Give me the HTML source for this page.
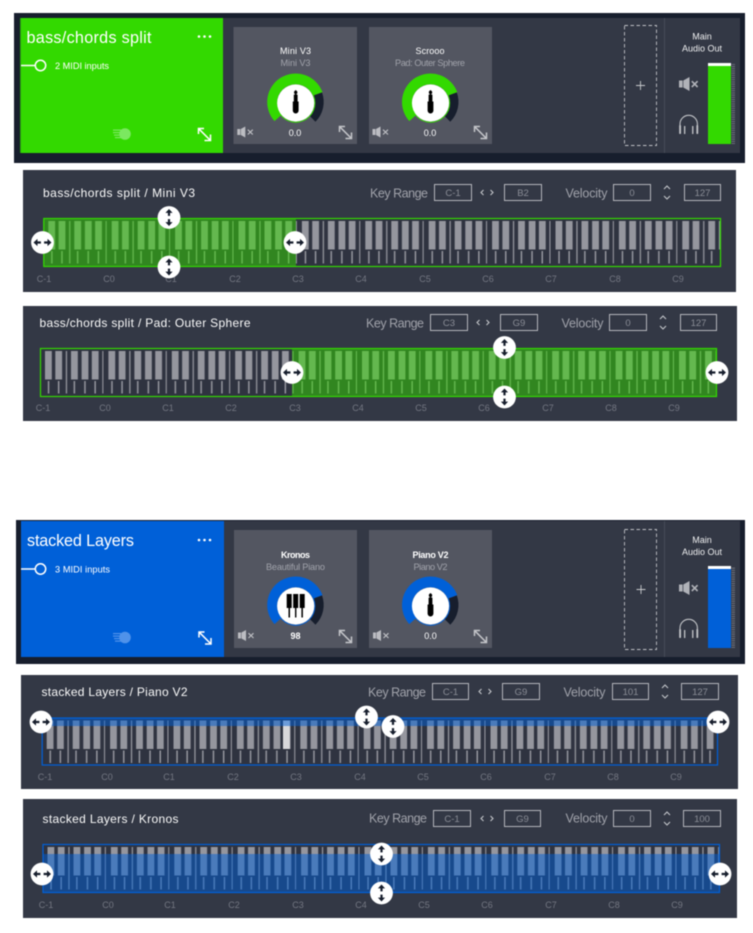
<!DOCTYPE html>
<html><head><meta charset="utf-8"><title>Layers</title>
<style>
html,body{margin:0;padding:0;background:#fff;width:753px;height:933px;overflow:hidden}
svg{display:block;position:absolute;left:0;top:0;filter:blur(.45px)}
text{font-family:"Liberation Sans",sans-serif}
.t{font-size:12px;fill:#fafafa}
.kr{font-size:12.5px;fill:#a0a2aa}
.bx{fill:none;stroke:#b4b6bb;stroke-width:1}
.v{font-size:9.5px;fill:#8a8d96;text-anchor:middle}
.o{font-size:9px;fill:#747782;text-anchor:middle}
.n{font-size:9px;fill:#fff;text-anchor:middle}
.s{font-size:9.2px;fill:#a0a2aa;text-anchor:middle}
.big{font-size:16.2px;fill:#fff}
.mi{font-size:9.2px;fill:#fff}
.m{font-size:9px;fill:#eeeff0;text-anchor:middle}
.ch{fill:none;stroke:#c4c6cb;stroke-width:1.1}
</style></head><body>
<svg xmlns="http://www.w3.org/2000/svg" width="753" height="933" viewBox="0 0 753 933">
<defs>
<pattern id="k" patternUnits="userSpaceOnUse" width="63.4" height="80">
<rect width="63.4" height="80" fill="#2f3340"/>
<g fill="#95969e">
<rect x="5" y="3" width="6.8" height="28.5"/><rect x="15.3" y="3" width="6.8" height="28.5"/>
<rect x="31" y="3" width="6.8" height="28.5"/><rect x="41.6" y="3" width="6.8" height="28.5"/>
<rect x="51.8" y="3" width="6.8" height="28.5"/>
<rect x="25.8" y="3" width="1.3" height="42.5"/><rect x="62.3" y="3" width="1.1" height="42.5"/>
<rect x="7.8" y="33" width="1.5" height="12.5"/><rect x="17.9" y="33" width="1.5" height="12.5"/>
<rect x="33.6" y="33" width="1.5" height="12.5"/><rect x="44.2" y="33" width="1.5" height="12.5"/>
<rect x="54.4" y="33" width="1.5" height="12.5"/>
</g>
</pattern>
<pattern id="k2" href="#k" patternTransform="translate(43.3,218)"/>
<pattern id="k3" href="#k" patternTransform="translate(40,348)"/>
<pattern id="k4" href="#k" patternTransform="translate(41.7,717.5)"/>
<pattern id="k5" href="#k" patternTransform="translate(42.5,844)"/>
<g id="hh"><circle r="11.4" fill="#fff"/><path fill="#171e2d" d="M-9 0L-5 -3.6V-1.1H-1.6V1.1H-5V3.6ZM9 0L5 -3.6V-1.1H1.6V1.1H5V3.6Z"/></g>
<g id="hv"><circle r="11.4" fill="#fff"/><path fill="#171e2d" d="M0 -8.5L-3.6 -4.6H-1.1V-1.6H1.1V-4.6H3.6ZM0 8.5L-3.6 4.6H-1.1V1.6H1.1V4.6H3.6Z"/></g>
<g id="exp" fill="none" stroke="currentColor" stroke-width="1.5"><path d="M.8 .8L12 12M.5 6V.5H6M12.5 6.5V12.5H6.5"/></g>
<g id="spk"><path fill="currentColor" d="M0 3.5H3.6V10.5H0ZM4.3 3.5L10.5 0V14L4.3 10.5Z"/><path fill="none" stroke="currentColor" stroke-width="1.6" d="M12.8 4.2L18.6 10M18.6 4.2L12.8 10"/></g>
<g id="spks"><path fill="currentColor" d="M0 2.5H3V8.5H0ZM3.5 2.5L8 0V11L3.5 8.5Z"/><path fill="none" stroke="currentColor" stroke-width="1.2" d="M10.5 3.2L15.5 8M15.5 3.2L10.5 8"/></g>
<g id="jack"><circle cy="1" r="18.6" fill="#fff"/><path fill="#000" d="M-1.6 -10.5L0 -12L1.6 -10.5V-8.4H.8V-7.4H1.9V-.5H2.9V8.6A2.9 2.9 0 0 1 -2.9 8.6V-.5H-1.9V-7.4H-.8V-8.4H-1.6Z"/></g>
<g id="pno"><circle cy="1" r="18.6" fill="#fff"/><path fill="#000" d="M-9 -11H-4V3H-5.7V12.5H-7.2V3H-9ZM-2.5 -11H2.5V3H.7V12.5H-.7V3H-2.5ZM4 -11H9V3H7.2V12.5H5.7V3H4Z"/></g>
<g id="ring"><path fill="none" stroke="currentColor" stroke-width="10" d="M-17.46 15.72A23.5 23.5 0 1 1 22.08 -8.04"/><path fill="none" stroke="#171e2d" stroke-width="9" d="M22.08 -8.04A23.5 23.5 0 0 1 16.6 16.6"/><circle cy="1" r="19.2" fill="none" stroke="currentColor" stroke-width="1"/></g>
<g id="head"><path fill="none" stroke="#c2c4c8" stroke-width="1.1" d="M1 14V9A8.7 8.7 0 0 1 18.4 9V14"/><rect x=".2" y="10" width="1.8" height="9" rx=".8" fill="#c2c4c8"/><rect x="17.4" y="10" width="1.8" height="9" rx=".8" fill="#c2c4c8"/><rect x="5" y="11" width="1.3" height="8" fill="#c2c4c8"/><rect x="13.1" y="11" width="1.3" height="8" fill="#c2c4c8"/></g>
<g id="upd"><path class="ch" d="M-3 -4L0 -7L3 -4M-3 3L0 6L3 3"/></g>
<pattern id="tk" patternUnits="userSpaceOnUse" width="4" height="2.2"><rect width="4" height="1.1" fill="#6b6f7a"/></pattern>
</defs>

<!-- TOP GROUP 1 -->
<rect x="14" y="13" width="731" height="150" fill="#171e2d"/>
<rect x="20" y="18" width="720" height="135" fill="#333845"/>
<rect x="20" y="18" width="203" height="135" fill="#33d900"/>
<rect x="20" y="18" width="1" height="135" fill="#2c9a16"/>
<text x="26.5" y="43" class="big" textLength="125">bass/chords split</text>
<g fill="#fff"><circle cx="199" cy="36.5" r="1.3"/><circle cx="204.5" cy="36.5" r="1.3"/><circle cx="210" cy="36.5" r="1.3"/></g>
<path d="M21 65.5H35" stroke="#fff" stroke-width="1.5"/><circle cx="40.5" cy="65.5" r="5.2" fill="none" stroke="#fff" stroke-width="1.5"/>
<text x="55" y="69" class="mi" textLength="54">2 MIDI inputs</text>
<g fill="#7be860"><circle cx="125" cy="134" r="5.8"/><rect x="113" y="129.5" width="8" height="1.2"/><rect x="113" y="132" width="8" height="1.2"/><rect x="114" y="134.5" width="8" height="1.2"/><rect x="115" y="137" width="7" height="1.2"/></g>
<use href="#exp" x="198" y="128" style="color:#fff"/>

<rect x="233.5" y="27" width="123.5" height="117" fill="#535661"/>
<text x="295.5" y="54" class="n" textLength="31">Mini V3</text>
<text x="295.5" y="66" class="s" textLength="30">Mini V3</text>
<use href="#ring" x="295.7" y="102" style="color:#33d900"/><use href="#jack" x="295.7" y="102"/>
<text x="295" y="136" class="n">0.0</text>
<use href="#spks" x="237.3" y="126.5" style="color:#bcbdc2"/>
<use href="#exp" x="339" y="126" style="color:#c4c5c9"/>

<rect x="369" y="27" width="123" height="117" fill="#535661"/>
<text x="430" y="54" class="n" textLength="29">Scrooo</text>
<text x="430" y="66" class="s" textLength="70">Pad: Outer Sphere</text>
<use href="#ring" x="430.5" y="102" style="color:#33d900"/><use href="#jack" x="430.5" y="102"/>
<text x="430" y="136" class="n">0.0</text>
<use href="#spks" x="372.5" y="126.5" style="color:#bcbdc2"/>
<use href="#exp" x="474" y="126" style="color:#c4c5c9"/>

<rect x="624.5" y="25.5" width="32" height="120" fill="none" stroke="#c0c2c6" stroke-width=".9" stroke-dasharray="3.5 2.5"/>
<path d="M636 85.5H645M640.5 81V90" stroke="#c8cacd" stroke-width=".9"/>
<rect x="664" y="18" width="1" height="135" fill="#464b58"/>
<text x="702" y="39.5" class="m">Main</text><text x="702" y="51.5" class="m" textLength="40">Audio Out</text>
<use href="#spk" x="679" y="77" style="color:#b0b2b8"/>
<use href="#head" x="679" y="115"/>
<rect x="708" y="63" width="23" height="81" fill="#33d900"/><rect x="708" y="63" width="23" height="3" fill="#fff"/>
<rect x="731.5" y="64" width="3.5" height="80" fill="url(#tk)"/>

<!-- PANEL 2 -->
<rect x="23" y="170" width="713" height="122" fill="#333845"/>
<text x="43" y="197" class="t" textLength="152">bass/chords split / Mini V3</text>
<text x="370" y="197.5" class="kr" textLength="58">Key Range</text>
<rect x="434.5" y="184.5" width="37" height="16" class="bx"/><text x="453" y="196" class="v">C-1</text>
<path class="ch" d="M483.5 190L481 192.5L483.5 195M490.5 190L493 192.5L490.5 195"/>
<rect x="504.5" y="184.5" width="37" height="16" class="bx"/><text x="523" y="196" class="v">B2</text>
<text x="565.5" y="197.5" class="kr" textLength="42">Velocity</text>
<rect x="613.5" y="184.5" width="37" height="16" class="bx"/><text x="632" y="196" class="v">0</text>
<use href="#upd" x="667" y="193"/>
<rect x="684.5" y="184.5" width="36" height="16" class="bx"/><text x="702.5" y="196" class="v">127</text>
<rect x="43.3" y="218" width="677.7" height="49" fill="url(#k2)"/>
<rect x="43.3" y="218" width="252.7" height="48" fill="#33d900" opacity=".5"/>
<rect x="43.8" y="218.5" width="676.7" height="48" fill="none" stroke="#33d900" stroke-width="1.2"/>
<text x="44" y="282" class="o">C-1</text><text x="109" y="282" class="o">C0</text><text x="171" y="282" class="o">C1</text><text x="235" y="282" class="o">C2</text><text x="298" y="282" class="o">C3</text><text x="361" y="282" class="o">C4</text><text x="425" y="282" class="o">C5</text><text x="488" y="282" class="o">C6</text><text x="551" y="282" class="o">C7</text><text x="615" y="282" class="o">C8</text><text x="678" y="282" class="o">C9</text>
<use href="#hh" x="42.5" y="242.5"/><use href="#hh" x="295" y="242.5"/>
<use href="#hv" x="169" y="217.5"/><use href="#hv" x="169" y="267"/>

<!-- PANEL 3 -->
<rect x="23" y="306" width="714" height="115" fill="#333845"/>
<text x="39.5" y="327" class="t" textLength="211">bass/chords split / Pad: Outer Sphere</text>
<text x="366" y="327.5" class="kr" textLength="58">Key Range</text>
<rect x="430.5" y="314.5" width="37" height="16" class="bx"/><text x="449" y="326" class="v">C3</text>
<path class="ch" d="M479.5 320L477 322.5L479.5 325M486.5 320L489 322.5L486.5 325"/>
<rect x="500.5" y="314.5" width="37" height="16" class="bx"/><text x="519" y="326" class="v">G9</text>
<text x="561.5" y="327.5" class="kr" textLength="42">Velocity</text>
<rect x="609.5" y="314.5" width="37" height="16" class="bx"/><text x="628" y="326" class="v">0</text>
<use href="#upd" x="663" y="323"/>
<rect x="680.5" y="314.5" width="36" height="16" class="bx"/><text x="698.5" y="326" class="v">127</text>
<rect x="40" y="348" width="677" height="49" fill="url(#k3)"/>
<rect x="292" y="348" width="425" height="48.5" fill="#33d900" opacity=".5"/>
<rect x="40.5" y="348.5" width="676" height="48" fill="none" stroke="#33d900" stroke-width="1.2"/>
<text x="43" y="411" class="o">C-1</text><text x="105" y="411" class="o">C0</text><text x="168" y="411" class="o">C1</text><text x="231" y="411" class="o">C2</text><text x="295" y="411" class="o">C3</text><text x="358" y="411" class="o">C4</text><text x="421" y="411" class="o">C5</text><text x="484" y="411" class="o">C6</text><text x="548" y="411" class="o">C7</text><text x="611" y="411" class="o">C8</text><text x="674" y="411" class="o">C9</text>
<use href="#hh" x="292" y="372.5"/><use href="#hh" x="717" y="372.5"/>
<use href="#hv" x="504.5" y="347.5"/><use href="#hv" x="504.5" y="397"/>

<!-- TOP GROUP 2 -->
<rect x="16" y="520" width="729" height="144" fill="#171e2d"/>
<rect x="21" y="521" width="719" height="136" fill="#333845"/>
<rect x="21" y="521" width="203" height="136" fill="#0060d8"/>
<text x="27" y="546" class="big" textLength="107">stacked Layers</text>
<g fill="#fff"><circle cx="199" cy="540" r="1.3"/><circle cx="204.5" cy="540" r="1.3"/><circle cx="210" cy="540" r="1.3"/></g>
<path d="M21 569H35" stroke="#fff" stroke-width="1.5"/><circle cx="40.5" cy="569" r="5.2" fill="none" stroke="#fff" stroke-width="1.5"/>
<text x="55" y="572.5" class="mi" textLength="55">3 MIDI inputs</text>
<g fill="#4f92ea"><circle cx="125" cy="637.5" r="5.8"/><rect x="113" y="633" width="8" height="1.2"/><rect x="113" y="635.5" width="8" height="1.2"/><rect x="114" y="638" width="8" height="1.2"/><rect x="115" y="640.5" width="7" height="1.2"/></g>
<use href="#exp" x="198.5" y="631.5" style="color:#fff"/>

<rect x="234" y="530" width="123" height="118" fill="#535661"/>
<text x="295.5" y="558" class="n" textLength="29" font-weight="bold">Kronos</text>
<text x="295.5" y="570" class="s" textLength="59">Beautiful Piano</text>
<use href="#ring" x="295.7" y="605" style="color:#0060d8"/><use href="#pno" x="295.7" y="605"/>
<text x="295.5" y="639" class="n" font-weight="bold">98</text>
<use href="#spks" x="238" y="630" style="color:#bcbdc2"/>
<use href="#exp" x="339" y="630" style="color:#c4c5c9"/>

<rect x="369" y="530" width="123" height="118" fill="#535661"/>
<text x="430.5" y="558" class="n" textLength="36" font-weight="bold">Piano V2</text>
<text x="430.5" y="570" class="s" textLength="34">Piano V2</text>
<use href="#ring" x="430.5" y="605" style="color:#0060d8"/><use href="#jack" x="430.5" y="605"/>
<text x="430.5" y="639" class="n">0.0</text>
<use href="#spks" x="373" y="630" style="color:#bcbdc2"/>
<use href="#exp" x="474" y="630" style="color:#c4c5c9"/>

<rect x="624.5" y="529.5" width="32" height="120" fill="none" stroke="#c0c2c6" stroke-width=".9" stroke-dasharray="3.5 2.5"/>
<path d="M636.5 589.5H645.5M641 585V594" stroke="#c8cacd" stroke-width=".9"/>
<rect x="664" y="521" width="1" height="136" fill="#464b58"/>
<text x="702" y="543" class="m">Main</text><text x="702" y="555" class="m" textLength="40">Audio Out</text>
<use href="#spk" x="679" y="581" style="color:#b0b2b8"/>
<use href="#head" x="679" y="619"/>
<rect x="708" y="566" width="23" height="82" fill="#0060d8"/><rect x="708" y="566" width="23" height="3" fill="#fff"/>
<rect x="731.5" y="567" width="3.5" height="81" fill="url(#tk)"/>

<!-- PANEL 4 -->
<rect x="21" y="675" width="717" height="114" fill="#333845"/>
<text x="41.5" y="696" class="t" textLength="146">stacked Layers / Piano V2</text>
<text x="368" y="696.5" class="kr" textLength="58">Key Range</text>
<rect x="432.5" y="683.5" width="36" height="16" class="bx"/><text x="450.5" y="695" class="v">C-1</text>
<path class="ch" d="M481.5 689L479 691.5L481.5 694M488.5 689L491 691.5L488.5 694"/>
<rect x="502.5" y="683.5" width="37" height="16" class="bx"/><text x="521" y="695" class="v">G9</text>
<text x="563.5" y="696.5" class="kr" textLength="42">Velocity</text>
<rect x="612.5" y="683.5" width="36" height="16" class="bx"/><text x="630.5" y="695" class="v">101</text>
<use href="#upd" x="665" y="692"/>
<rect x="681.5" y="683.5" width="37" height="16" class="bx"/><text x="700" y="695" class="v">127</text>
<rect x="41.7" y="717.5" width="676.3" height="48" fill="url(#k4)"/>
<rect x="283" y="720.5" width="6.8" height="28.5" fill="#d8d8da"/>
<rect x="41.7" y="717.5" width="676.3" height="8.5" fill="#0060d8" opacity=".5"/>
<rect x="42.2" y="718" width="675.3" height="47" fill="none" stroke="#0060d8" stroke-width="1.2"/>
<text x="45" y="780" class="o">C-1</text><text x="107" y="780" class="o">C0</text><text x="169" y="780" class="o">C1</text><text x="233" y="780" class="o">C2</text><text x="296" y="780" class="o">C3</text><text x="360" y="780" class="o">C4</text><text x="423" y="780" class="o">C5</text><text x="486" y="780" class="o">C6</text><text x="550" y="780" class="o">C7</text><text x="613" y="780" class="o">C8</text><text x="676" y="780" class="o">C9</text>
<use href="#hh" x="41" y="722"/><use href="#hh" x="718" y="722"/>
<use href="#hv" x="366.5" y="717"/><use href="#hv" x="393" y="726.5"/>

<!-- PANEL 5 -->
<rect x="23" y="799" width="714" height="119" fill="#333845"/>
<text x="42.5" y="823" class="t" textLength="136">stacked Layers / Kronos</text>
<text x="369" y="822.5" class="kr" textLength="58">Key Range</text>
<rect x="433.5" y="810.5" width="37" height="16" class="bx"/><text x="452" y="822" class="v">C-1</text>
<path class="ch" d="M483.5 816L481 818.5L483.5 821M490.5 816L493 818.5L490.5 821"/>
<rect x="504.5" y="810.5" width="36" height="16" class="bx"/><text x="522.5" y="822" class="v">G9</text>
<text x="565.5" y="822.5" class="kr" textLength="42">Velocity</text>
<rect x="613.5" y="810.5" width="37" height="16" class="bx"/><text x="632" y="822" class="v">0</text>
<use href="#upd" x="667" y="819"/>
<rect x="683.5" y="810.5" width="37" height="16" class="bx"/><text x="702" y="822" class="v">100</text>
<rect x="42.5" y="844" width="677.5" height="49" fill="url(#k5)"/>
<rect x="42.5" y="854" width="677.5" height="39" fill="#0060d8" opacity=".5"/>
<rect x="43" y="844.5" width="676.5" height="48" fill="none" stroke="#0060d8" stroke-width="1.2"/>
<text x="46" y="908" class="o">C-1</text><text x="108" y="908" class="o">C0</text><text x="170" y="908" class="o">C1</text><text x="234" y="908" class="o">C2</text><text x="298" y="908" class="o">C3</text><text x="361" y="908" class="o">C4</text><text x="424" y="908" class="o">C5</text><text x="487" y="908" class="o">C6</text><text x="551" y="908" class="o">C7</text><text x="614" y="908" class="o">C8</text><text x="677" y="908" class="o">C9</text>
<use href="#hh" x="42" y="874"/><use href="#hh" x="720" y="874"/>
<use href="#hv" x="381.5" y="854"/><use href="#hv" x="381.5" y="893"/>
</svg>
</body></html>
